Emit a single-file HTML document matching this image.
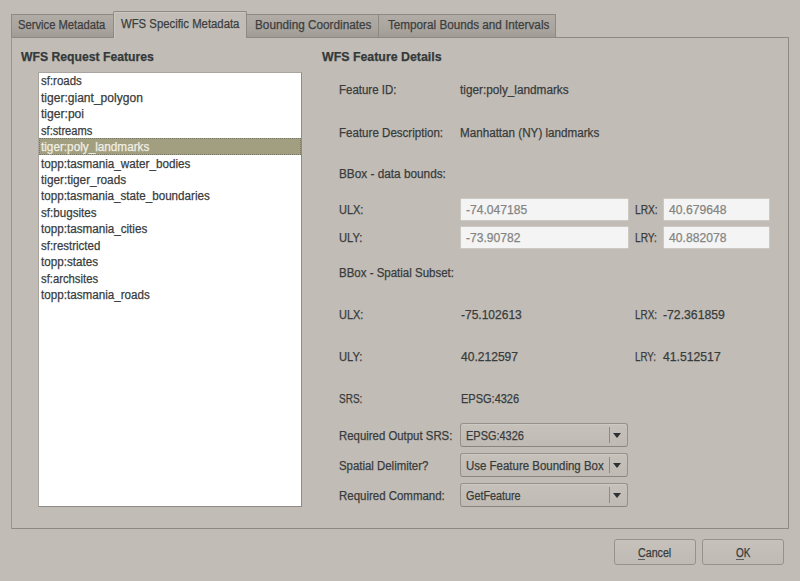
<!DOCTYPE html>
<html><head><meta charset="utf-8"><style>
html,body{margin:0;padding:0;}
body{width:800px;height:581px;background:#c1bcb5;position:relative;overflow:hidden;font-family:"Liberation Sans",sans-serif;font-size:12.5px;color:#383b3c;}
.t{position:absolute;white-space:nowrap;line-height:14px;transform-origin:0 0;-webkit-text-stroke:0.25px currentColor;}
.b{font-weight:bold;color:#34393a;}
.panel{position:absolute;left:11px;top:37px;width:778px;height:492px;border:1px solid #8e8a83;border-left-color:#9a958e;box-sizing:border-box;border-radius:1px;}
.tab{position:absolute;top:14px;height:23px;background:linear-gradient(#b1aca5,#a8a39c 70%,#9f9a93);border:1px solid #8e8a83;border-bottom:none;box-sizing:border-box;border-radius:1px 1px 0 0;}
.tab.act{top:11px;height:27px;background:#c1bcb5;z-index:2;border-radius:2px 2px 0 0;box-shadow:inset 1px 1px 0 #cbc7c1;}
.tt{z-index:3;color:#3b3e3f;}
.list{position:absolute;left:38px;top:72px;width:264px;height:435px;background:#fff;border:1px solid #a9a59e;border-right-color:#8e8a84;border-bottom-color:#8e8a84;box-sizing:border-box;border-radius:1px;}
.sel{position:absolute;left:39px;top:138px;width:262px;height:17px;background:#a29f80;border:1px dotted #7a7964;box-sizing:border-box;}
.selt{color:#f2efe4;}
.field{position:absolute;background:#f4f4f4;box-shadow:0 0 0 0.5px #d8d5d0;}
.fv{color:#858482;}
.combo{position:absolute;left:460px;width:168px;height:24px;border:1px solid #96928b;border-bottom-color:#8a867f;border-radius:3px;box-sizing:border-box;background:linear-gradient(#c6c2bb,#bfbab3);box-shadow:inset 0 1px 0 #cdc9c3;}
.combo .sep{position:absolute;left:148px;top:3px;width:1px;height:16px;background:#8f8b84;}
.combo .arr{position:absolute;left:152px;top:9px;width:0;height:0;border-left:4.3px solid transparent;border-right:4.3px solid transparent;border-top:5px solid #2e3133;}
.btn{position:absolute;top:539px;height:26px;border:1px solid #96928b;border-radius:3px;box-sizing:border-box;background:linear-gradient(#c6c2bb,#bfbab3);}
.ul{position:absolute;top:559px;height:1px;background:#5b5d5c;}
</style></head><body>
<div class="panel"></div>

<div class="tab" style="left:11px;width:103px"></div>
<div class="tab act" style="left:113px;width:134px"></div>
<div class="tab" style="left:246px;width:133px"></div>
<div class="tab" style="left:378px;width:178px"></div>

<div class="t tt" style="left:18.30px;top:18.00px;transform:scaleX(0.8972);">Service Metadata</div>
<div class="t tt act" style="left:121.00px;top:17.00px;transform:scaleX(0.9067);">WFS Specific Metadata</div>
<div class="t tt" style="left:255.30px;top:18.00px;transform:scaleX(0.9418);">Bounding Coordinates</div>
<div class="t tt" style="left:387.50px;top:18.00px;transform:scaleX(0.9362);">Temporal Bounds and Intervals</div>
<div class="t  b" style="left:21.20px;top:50.00px;transform:scaleX(0.9758);">WFS Request Features</div>
<div class="t  b" style="left:322.30px;top:50.00px;transform:scaleX(0.9892);">WFS Feature Details</div>
<div class="list"></div><div class="sel"></div>
<div class="t li" style="left:41.20px;top:74.00px;transform:scaleX(0.9169);">sf:roads</div>
<div class="t li" style="left:41.20px;top:91.00px;transform:scaleX(0.9640);">tiger:giant_polygon</div>
<div class="t li" style="left:41.20px;top:107.00px;transform:scaleX(0.9674);">tiger:poi</div>
<div class="t li" style="left:41.20px;top:124.00px;transform:scaleX(0.8906);">sf:streams</div>
<div class="t li selt" style="left:41.20px;top:140.00px;transform:scaleX(0.9393);">tiger:poly_landmarks</div>
<div class="t li" style="left:41.20px;top:157.00px;transform:scaleX(0.9343);">topp:tasmania_water_bodies</div>
<div class="t li" style="left:41.20px;top:173.00px;transform:scaleX(0.9419);">tiger:tiger_roads</div>
<div class="t li" style="left:41.20px;top:189.00px;transform:scaleX(0.9305);">topp:tasmania_state_boundaries</div>
<div class="t li" style="left:41.20px;top:206.00px;transform:scaleX(0.9289);">sf:bugsites</div>
<div class="t li" style="left:41.20px;top:222.00px;transform:scaleX(0.9325);">topp:tasmania_cities</div>
<div class="t li" style="left:41.20px;top:239.00px;transform:scaleX(0.9180);">sf:restricted</div>
<div class="t li" style="left:41.20px;top:255.00px;transform:scaleX(0.9322);">topp:states</div>
<div class="t li" style="left:41.20px;top:272.00px;transform:scaleX(0.9027);">sf:archsites</div>
<div class="t li" style="left:41.20px;top:288.00px;transform:scaleX(0.9323);">topp:tasmania_roads</div>
<div class="t " style="left:338.60px;top:83.00px;transform:scaleX(0.9184);">Feature ID:</div>
<div class="t " style="left:460.00px;top:83.00px;transform:scaleX(0.9419);">tiger:poly_landmarks</div>
<div class="t " style="left:338.60px;top:126.00px;transform:scaleX(0.9244);">Feature Description:</div>
<div class="t " style="left:460.00px;top:126.00px;transform:scaleX(0.9324);">Manhattan (NY) landmarks</div>
<div class="t " style="left:338.60px;top:167.00px;transform:scaleX(0.9435);">BBox - data bounds:</div>
<div class="t " style="left:338.60px;top:203.00px;transform:scaleX(0.8777);">ULX:</div>
<div class="field" style="left:461px;top:199px;width:167px;height:21px"></div>
<div class="t fv" style="left:466.00px;top:203.00px;transform:scaleX(0.9684);">-74.047185</div>
<div class="t " style="left:634.60px;top:203.00px;transform:scaleX(0.8165);">LRX:</div>
<div class="field" style="left:664px;top:199px;width:105px;height:21px"></div>
<div class="t fv" style="left:669.20px;top:203.00px;transform:scaleX(0.9712);">40.679648</div>
<div class="t " style="left:338.60px;top:231.00px;transform:scaleX(0.8931);">ULY:</div>
<div class="field" style="left:461px;top:227px;width:167px;height:21px"></div>
<div class="t fv" style="left:466.00px;top:231.00px;transform:scaleX(0.9680);">-73.90782</div>
<div class="t " style="left:634.60px;top:231.00px;transform:scaleX(0.8141);">LRY:</div>
<div class="field" style="left:664px;top:227px;width:105px;height:21px"></div>
<div class="t fv" style="left:669.20px;top:231.00px;transform:scaleX(0.9712);">40.882078</div>
<div class="t " style="left:338.60px;top:266.00px;transform:scaleX(0.9193);">BBox - Spatial Subset:</div>
<div class="t " style="left:338.60px;top:308.00px;transform:scaleX(0.8777);">ULX:</div>
<div class="t " style="left:460.50px;top:308.00px;transform:scaleX(0.9604);">-75.102613</div>
<div class="t " style="left:634.90px;top:308.00px;transform:scaleX(0.7950);">LRX:</div>
<div class="t " style="left:663.00px;top:308.00px;transform:scaleX(0.9778);">-72.361859</div>
<div class="t " style="left:338.60px;top:350.00px;transform:scaleX(0.8931);">ULY:</div>
<div class="t " style="left:460.50px;top:350.00px;transform:scaleX(0.9645);">40.212597</div>
<div class="t " style="left:635.00px;top:350.00px;transform:scaleX(0.7807);">LRY:</div>
<div class="t " style="left:663.00px;top:350.00px;transform:scaleX(0.9763);">41.512517</div>
<div class="t " style="left:338.60px;top:392.00px;transform:scaleX(0.8014);">SRS:</div>
<div class="t " style="left:460.50px;top:392.00px;transform:scaleX(0.8803);">EPSG:4326</div>
<div class="t " style="left:338.60px;top:429.00px;transform:scaleX(0.9116);">Required Output SRS:</div>
<div class="t " style="left:338.60px;top:459.00px;transform:scaleX(0.9122);">Spatial Delimiter?</div>
<div class="t " style="left:338.60px;top:489.00px;transform:scaleX(0.9167);">Required Command:</div>
<div class="combo" style="top:423px"><div class="sep"></div><div class="arr"></div></div>
<div class="t " style="left:466.20px;top:429.00px;transform:scaleX(0.8773);">EPSG:4326</div>
<div class="combo" style="top:453px"><div class="sep"></div><div class="arr"></div></div>
<div class="t " style="left:466.20px;top:459.00px;transform:scaleX(0.9174);">Use Feature Bounding Box</div>
<div class="combo" style="top:483px"><div class="sep"></div><div class="arr"></div></div>
<div class="t " style="left:466.20px;top:489.00px;transform:scaleX(0.8639);">GetFeature</div>
<div class="btn" style="left:614px;width:82px"></div><div class="btn" style="left:702px;width:82px"></div>
<div class="t u1" style="left:638.30px;top:546.00px;transform:scaleX(0.8535);">Cancel</div>
<div class="t u2" style="left:736.00px;top:546.00px;transform:scaleX(0.7956);">OK</div>
<div class="ul" style="left:638px;width:7px"></div><div class="ul" style="left:736px;width:8px"></div>
</body></html>
